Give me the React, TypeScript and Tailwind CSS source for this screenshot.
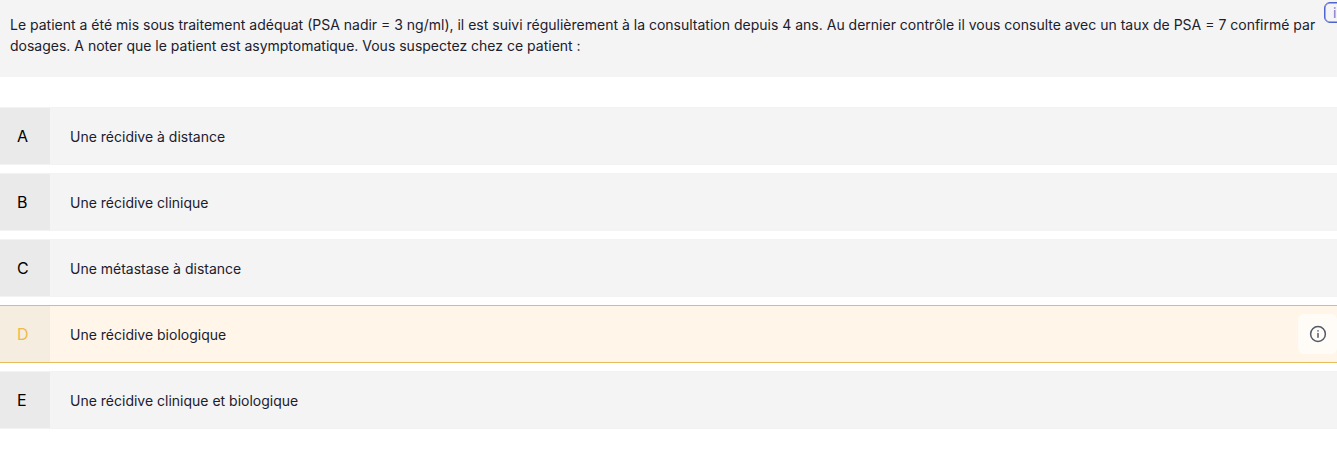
const choices = [
  { letter: "A", text: "Une récidive à distance" },
  { letter: "B", text: "Une récidive clinique" },
  { letter: "C", text: "Une métastase à distance" },
  { letter: "D", text: "Une récidive biologique", selected: true },
  { letter: "E", text: "Une récidive clinique et biologique" },
];

function InfoIcon() {
  return (
    <svg width="18" height="18" viewBox="0 0 18 18" fill="none" stroke="#535966" strokeWidth="1.5" strokeLinecap="round">
      <circle cx="9" cy="9" r="7.4" />
      <path d="M9 8.4v3.8M9 5.8v.1" />
    </svg>
  );
}

export default function App() {
  return (
    <main className="relative h-[453px] w-full overflow-hidden bg-white font-['Inter',sans-serif] text-[#1b202c]">
      <section className="h-[77px] bg-[#f4f4f4] pl-2.5 pt-[14px] text-sm leading-[21px] whitespace-nowrap">
        <p>Le patient a été mis sous traitement adéquat (PSA nadir = 3 ng/ml), il est suivi régulièrement à la consultation depuis 4 ans. Au dernier contrôle il vous consulte avec un taux de PSA = 7 confirmé par</p>
        <p>dosages. A noter que le patient est asymptomatique. Vous suspectez chez ce patient :</p>
      </section>
      <div className="absolute left-[1324px] top-[2px] flex h-[21px] w-[40px] items-center rounded-md border border-[#4f63cc] bg-[#f4f4f6] pl-2 text-sm text-[#6b7bd3] ring-[0.5px] ring-inset ring-[#4f63cc]">i</div>
      <ul className="mt-[30px] flex flex-col gap-2">
        {choices.map((c) => (
          <li key={c.letter} className={c.selected ? "flex h-[58px] border-y border-[#e6bc5a] bg-[#fff6e9]" : "flex h-[58px] border-y border-[#f3f3f3] bg-[#f4f4f4]"}>
            <span className={c.selected ? "flex w-[50px] items-center bg-[#f5ede0] pl-[17px] text-base text-[#f0b94a]" : "flex w-[50px] items-center bg-[#eaeaea] pl-[17px] text-base text-black"}>{c.letter}</span>
            <span className="flex flex-1 items-center pl-5 pt-0.5 text-sm">{c.text}</span>
            {c.selected && (
              <button className="my-auto flex h-10 w-[39px] items-center justify-center rounded-md bg-[#fffcf7]"><InfoIcon /></button>
            )}
          </li>
        ))}
      </ul>
    </main>
  );
}
